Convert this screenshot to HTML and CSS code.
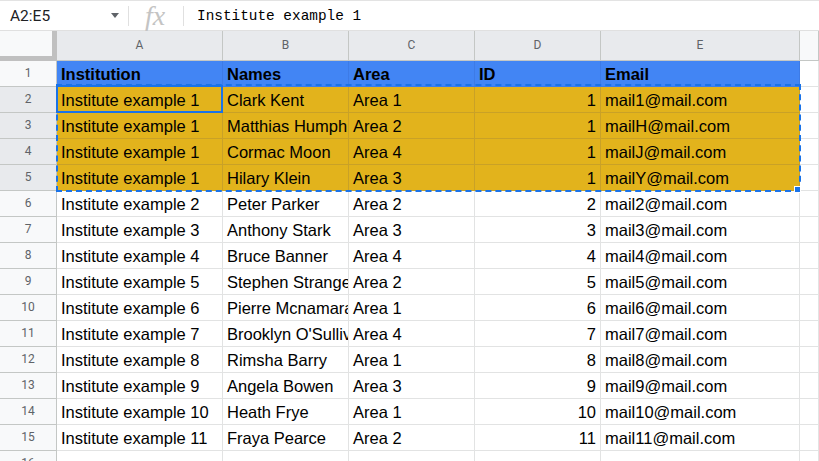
FILE: index.html
```html
<!DOCTYPE html>
<html lang="en">
<head>
    <meta charset="UTF-8">
    <meta name="viewport" content="width=device-width, initial-scale=1.0">
    <title>Institutes sheet</title>
    <link rel="stylesheet" href="styles.css">
</head>
<body>
    <div class="formula-bar">
        <div class="name-box">
            <span class="range">A2:E5</span>
            <span class="caret"></span>
        </div>
        <div class="sep"></div>
        <div class="fx">fx</div>
        <div class="sep"></div>
        <div class="formula">Institute example 1</div>
    </div>

    <div class="sheet">
        <div class="grid" id="grid">
            <!-- cells are built below -->
        </div>
        <div class="copy-range"></div>
        <div class="active-cell"></div>
        <div class="fill-handle"></div>
    </div>

    <script>
        const rows = [
            ['Institution', 'Names', 'Area', 'ID', 'Email'],
            ['Institute example 1', 'Clark Kent', 'Area 1', '1', 'mail1@mail.com'],
            ['Institute example 1', 'Matthias Humphrey', 'Area 2', '1', 'mailH@mail.com'],
            ['Institute example 1', 'Cormac Moon', 'Area 4', '1', 'mailJ@mail.com'],
            ['Institute example 1', 'Hilary Klein', 'Area 3', '1', 'mailY@mail.com'],
            ['Institute example 2', 'Peter Parker', 'Area 2', '2', 'mail2@mail.com'],
            ['Institute example 3', 'Anthony Stark', 'Area 3', '3', 'mail3@mail.com'],
            ['Institute example 4', 'Bruce Banner', 'Area 4', '4', 'mail4@mail.com'],
            ['Institute example 5', 'Stephen Strange', 'Area 2', '5', 'mail5@mail.com'],
            ['Institute example 6', 'Pierre Mcnamara', 'Area 1', '6', 'mail6@mail.com'],
            ['Institute example 7', "Brooklyn O'Sullivan", 'Area 4', '7', 'mail7@mail.com'],
            ['Institute example 8', 'Rimsha Barry', 'Area 1', '8', 'mail8@mail.com'],
            ['Institute example 9', 'Angela Bowen', 'Area 3', '9', 'mail9@mail.com'],
            ['Institute example 10', 'Heath Frye', 'Area 1', '10', 'mail10@mail.com'],
            ['Institute example 11', 'Fraya Pearce', 'Area 2', '11', 'mail11@mail.com'],
            ['', '', '', '', '']
        ];

        const grid = document.getElementById('grid');

        function addCell(cls, text) {
            const cell = document.createElement('div');
            cell.className = cls;
            cell.textContent = text;
            grid.appendChild(cell);
        }

        // column letters
        addCell('c corner', '');
        ['A', 'B', 'C', 'D', 'E'].forEach(letter => addCell('c colhead sel', letter));
        addCell('c colhead', '');

        rows.forEach((row, i) => {
            const n = i + 1;
            const picked = n >= 2 && n <= 5;
            addCell('c rowhead' + (picked ? ' sel' : ''), n);
            row.forEach((value, j) => {
                let cls = 'c';
                if (n === 1) cls += ' title';
                else if (picked) cls += ' gold';
                if (j === 3 && n !== 1) cls += ' num';
                addCell(cls, value);
            });
            addCell('c', '');
        });
    </script>
</body>
</html>
```

FILE: styles.css
```css
body {
    margin: 0;
    font-family: "Liberation Sans", Arial, sans-serif;
    background-color: #ffffff;
    overflow: hidden;
}
.formula-bar {
    display: flex;
    align-items: center;
    height: 29px;
    border-top: 1px solid #e3e3e3;
    border-bottom: 1px solid #e0e0e0;
}
.name-box {
    display: flex;
    align-items: center;
    justify-content: space-between;
    box-sizing: border-box;
    width: 128px;
    padding: 0 9px 0 10px;
    font-family: Roboto, "Liberation Sans", sans-serif;
    font-size: 15.5px;
    color: #202124;
}
.caret {
    width: 0;
    height: 0;
    border-left: 4px solid transparent;
    border-right: 4px solid transparent;
    border-top: 5px solid #5f6368;
}
.sep {
    width: 1px;
    height: 20px;
    background-color: #e0e0e0;
}
.fx {
    width: 54px;
    padding-right: 2px;
    box-sizing: border-box;
    text-align: center;
    font-family: "Liberation Serif", serif;
    font-style: italic;
    font-size: 28px;
    line-height: 28px;
    color: #c4c4c4;
}
.formula {
    padding-left: 13px;
    font-family: "Liberation Mono", monospace;
    font-size: 14.4px;
    color: #000000;
}
.sheet {
    position: relative;
}
.grid {
    display: grid;
    grid-template-columns: 57px 166px 126px 126px 126px 199px 1fr;
    grid-template-rows: 30px;
    grid-auto-rows: 26px;
}
.c {
    box-sizing: border-box;
    border-right: 1px solid #e2e3e3;
    border-bottom: 1px solid #e2e3e3;
    padding: 1px 4px 0;
    font-size: 16.5px;
    line-height: 24px;
    color: #000000;
    white-space: nowrap;
    overflow: hidden;
}
.corner {
    background-color: #f8f9fa;
    border-right: 5px solid #c0c0c0;
    border-bottom: 5px solid #c0c0c0;
}
.colhead, .rowhead {
    padding: 0;
    text-align: center;
    font-family: Roboto, "Liberation Sans", sans-serif;
    font-size: 12px;
    color: #5f6368;
    background-color: #f8f9fa;
    border-color: #c4c7c5;
}
.colhead {
    line-height: 29px;
}
.rowhead {
    line-height: 25px;
}
.colhead.sel, .rowhead.sel {
    background-color: #e8eaed;
}
.title {
    font-weight: bold;
    background-color: #4285f4;
    border-color: #3d7be6;
}
.gold {
    background-color: #e2b31c;
    border-color: #c9a127;
}
.num {
    text-align: right;
}
.copy-range {
    position: absolute;
    left: 56px;
    top: 53px;
    width: 745px;
    height: 108px;
    box-sizing: border-box;
    border: 2px dashed #1a73e8;
}
.active-cell {
    position: absolute;
    left: 56px;
    top: 54px;
    width: 167px;
    height: 28px;
    box-sizing: border-box;
    border: 2px solid #1a73e8;
}
.fill-handle {
    position: absolute;
    left: 794px;
    top: 155px;
    width: 7px;
    height: 7px;
    box-sizing: border-box;
    background-color: #1a73e8;
    border: 1px solid #ffffff;
}
```
